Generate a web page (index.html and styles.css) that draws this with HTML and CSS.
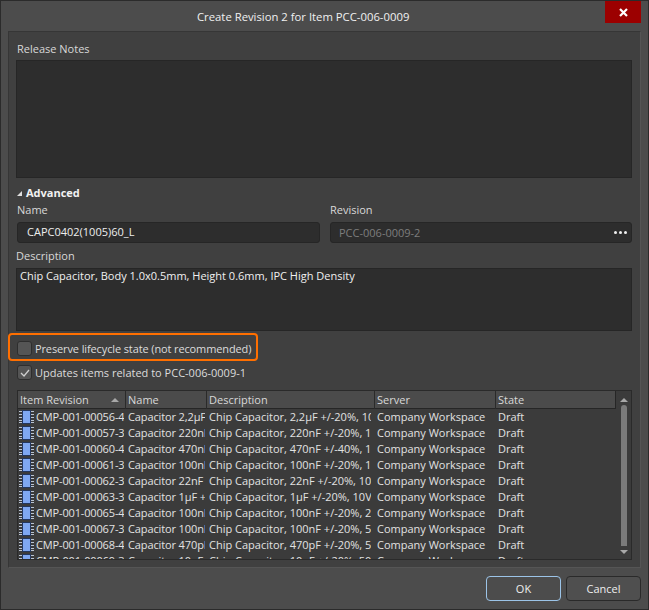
FILE: index.html
```html
<!DOCTYPE html>
<html lang="en">
<head>
<meta charset="utf-8">
<title>Create Revision 2</title>
<link rel="stylesheet" href="styles.css">
</head>
<body>
<svg class="defs" width="0" height="0" aria-hidden="true">
  <symbol id="chip" viewBox="0 0 15 14">
    <path d="M0 1.5h15M0 4.5h15M0 7.5h15M0 10.5h15M0 12.5h15" stroke="#b9c3d2" stroke-width="1" fill="none"/>
    <rect x="3" y="0" width="9" height="14" fill="#23375f"/>
    <rect x="4" y="1" width="7" height="12" fill="#7fa8f2"/>
  </symbol>
</svg>
<div class="window">
  <header class="titlebar">
    <h1 class="title">Create Revision 2 for Item PCC-006-0009</h1>
    <button class="close" aria-label="Close">
      <svg width="9" height="9" viewBox="0 0 9 9"><path d="M1 1l7 7M8 1L1 8" stroke="#fff" stroke-width="2.2" fill="none"/></svg>
    </button>
  </header>
  <main class="panel">
    <label class="label notes-label">Release Notes</label>
    <div class="box notes"></div>
    <div class="advanced"><span class="tri"></span>Advanced</div>
    <div class="fields">
      <div class="field">
        <label class="label">Name</label>
        <div class="input name-input">CAPC0402(1005)60_L</div>
      </div>
      <div class="field">
        <label class="label">Revision</label>
        <div class="input rev-input"><span>PCC-006-0009-2</span><span class="dots"><i></i><i></i><i></i></span></div>
      </div>
    </div>
    <label class="label desc-label">Description</label>
    <div class="box desc">Chip Capacitor, Body 1.0x0.5mm, Height 0.6mm, IPC High Density</div>
    <div class="highlight">
      <span class="check"></span>
      <span class="check-text">Preserve lifecycle state (not recommended)</span>
    </div>
    <div class="check-row">
      <span class="check">
        <svg width="10" height="8" viewBox="0 0 10 8"><path d="M1 4l3 3 5-6" stroke="#cfcfcf" stroke-width="1.3" fill="none"/></svg>
      </span>
      <span class="check-text">Updates items related to PCC-006-0009-1</span>
    </div>
    <div class="table">
      <div class="table-main">
        <div class="row head">
          <div class="th first">Item Revision<span class="sort"></span></div>
          <div class="th">Name</div>
          <div class="th">Description</div>
          <div class="th">Server</div>
          <div class="th">State</div>
        </div>
        <div class="rows">
          <div class="row"><div class="td id"><svg class="chip"><use href="#chip"/></svg>CMP-001-00056-4</div><div class="td tight">Capacitor 2,2µF</div><div class="td dsc">Chip Capacitor, 2,2µF +/-20%, 10V</div><div class="td">Company Workspace</div><div class="td">Draft</div></div>
          <div class="row"><div class="td id"><svg class="chip"><use href="#chip"/></svg>CMP-001-00057-3</div><div class="td tight">Capacitor 220nF</div><div class="td dsc">Chip Capacitor, 220nF +/-20%, 16V</div><div class="td">Company Workspace</div><div class="td">Draft</div></div>
          <div class="row"><div class="td id"><svg class="chip"><use href="#chip"/></svg>CMP-001-00060-4</div><div class="td tight">Capacitor 470nF</div><div class="td dsc">Chip Capacitor, 470nF +/-40%, 16V</div><div class="td">Company Workspace</div><div class="td">Draft</div></div>
          <div class="row"><div class="td id"><svg class="chip"><use href="#chip"/></svg>CMP-001-00061-3</div><div class="td tight">Capacitor 100nF</div><div class="td dsc">Chip Capacitor, 100nF +/-20%, 16V</div><div class="td">Company Workspace</div><div class="td">Draft</div></div>
          <div class="row"><div class="td id"><svg class="chip"><use href="#chip"/></svg>CMP-001-00062-3</div><div class="td tight">Capacitor 22nF</div><div class="td dsc">Chip Capacitor, 22nF +/-20%, 10V</div><div class="td">Company Workspace</div><div class="td">Draft</div></div>
          <div class="row"><div class="td id"><svg class="chip"><use href="#chip"/></svg>CMP-001-00063-3</div><div class="td tight">Capacitor 1µF +/-20%</div><div class="td dsc">Chip Capacitor, 1µF +/-20%, 10V</div><div class="td">Company Workspace</div><div class="td">Draft</div></div>
          <div class="row"><div class="td id"><svg class="chip"><use href="#chip"/></svg>CMP-001-00065-4</div><div class="td tight">Capacitor 100nF</div><div class="td dsc">Chip Capacitor, 100nF +/-20%, 25V</div><div class="td">Company Workspace</div><div class="td">Draft</div></div>
          <div class="row"><div class="td id"><svg class="chip"><use href="#chip"/></svg>CMP-001-00067-3</div><div class="td tight">Capacitor 100nF</div><div class="td dsc">Chip Capacitor, 100nF +/-20%, 50V</div><div class="td">Company Workspace</div><div class="td">Draft</div></div>
          <div class="row"><div class="td id"><svg class="chip"><use href="#chip"/></svg>CMP-001-00068-4</div><div class="td tight">Capacitor 470pF</div><div class="td dsc">Chip Capacitor, 470pF +/-20%, 50V</div><div class="td">Company Workspace</div><div class="td">Draft</div></div>
          <div class="row"><div class="td id"><svg class="chip"><use href="#chip"/></svg>CMP-001-00069-3</div><div class="td tight">Capacitor 10nF</div><div class="td dsc">Chip Capacitor, 10nF +/-20%, 50V</div><div class="td">Company Workspace</div><div class="td">Draft</div></div>
        </div>
      </div>
      <div class="scrollbar">
        <span class="arrow up"></span>
        <span class="thumb"></span>
        <span class="arrow down"></span>
      </div>
    </div>
  </main>
  <footer class="footer">
    <button class="btn primary">OK</button>
    <button class="btn">Cancel</button>
  </footer>
</div>
</body>
</html>
```
FILE: styles.css
```css
* { box-sizing: border-box; }
html, body { margin: 0; padding: 0; }
body {
  width: 649px;
  height: 610px;
  overflow: hidden;
  background: #4c4c4c;
  font: 11px/14px "Open Sans", "Noto Sans", sans-serif;
  color: #e6e6e6;
}
.defs { display: block; width: 0; height: 0; }
.window {
  width: 649px;
  height: 610px;
  display: flex;
  flex-direction: column;
  background: #4c4c4c;
  border: 1px solid #2b2b2b;
}
.titlebar {
  height: 30px;
  flex: none;
  display: flex;
  justify-content: space-between;
  align-items: flex-start;
  padding-left: 196px;
}
.title {
  margin: 8px 0 0;
  font-size: 11.3px;
  line-height: 16px;
  font-weight: 400;
  color: #f0f0f0;
}
.close {
  width: 36px;
  height: 22px;
  margin: 0 7px 0 0;
  padding: 0;
  border: 0;
  background: #9c0000;
  display: flex;
  align-items: center;
  justify-content: center;
}
.panel {
  margin: 0 7px;
  width: 633px;
  height: 537px;
  flex: none;
  display: flex;
  flex-direction: column;
  padding: 0 8px 7px 7px;
  background: #404040;
  border: 1px solid #363636;
  border-right-color: #555;
  border-bottom-color: #555;
}
.label {
  display: block;
  font-size: 11px;
  line-height: 14px;
  color: #d8d8d8;
}
.notes-label { margin: 10px 0 4px 1px; }
.box {
  background: #2d2d2d;
  border: 1px solid #262626;
}
.notes { height: 118px; flex: none; }
.advanced {
  display: flex;
  align-items: center;
  height: 14px;
  margin: 8px 0 3px 1px;
  font-weight: 700;
  color: #f2f2f2;
}
.tri {
  width: 0;
  height: 0;
  margin-right: 4px;
  border-style: solid;
  border-width: 0 0 5px 5px;
  border-color: transparent transparent #e0e0e0 transparent;
}
.fields {
  display: grid;
  grid-template-columns: 303px 302px;
  column-gap: 10px;
  margin-left: 1px;
}
.field .label { margin-bottom: 5px; }
.input {
  height: 21px;
  background: #2d2d2d;
  border: 1px solid #262626;
  border-radius: 3px;
  padding: 1px 9px;
  line-height: 15px;
  color: #eee;
}
.rev-input {
  display: flex;
  justify-content: space-between;
  align-items: center;
  padding: 0 4px 1px 8px;
  color: #7d7d7d;
}
.dots { display: flex; gap: 2px; }
.dots i { width: 3px; height: 3px; border-radius: 50%; background: #f0f0f0; }
.desc-label { margin: 6px 0 5px 0; }
.desc {
  height: 63px;
  flex: none;
  padding: 0 3px;
  line-height: 14px;
  color: #f0f0f0;
}
.highlight {
  display: flex;
  align-items: center;
  width: 250px;
  height: 30px;
  margin: 2px 0 4px -8px;
  padding: 2px 0 0 7px;
  white-space: nowrap;
  border: 2px solid #ff6f00;
  border-radius: 4px;
}
.highlight .check-text { letter-spacing: -0.12px; padding-top: 2px; }
.check {
  width: 15px;
  height: 15px;
  flex: none;
  margin-right: 3px;
  display: flex;
  align-items: center;
  justify-content: center;
  background: #555;
  border: 1px solid #2e2e2e;
  border-radius: 3px;
}
.check-text { color: #dcdcdc; }
.check-row {
  display: flex;
  align-items: center;
  margin: 0 0 10px 1px;
  height: 16px;
}
.table {
  height: 170px;
  flex: none;
  display: flex;
  margin-left: 1px;
  background: #3b3b3b;
  border: 1px solid #2a2a2a;
}
.table-main { flex: 1; min-width: 0; display: flex; flex-direction: column; }
.row {
  display: grid;
  grid-template-columns: 107px 81px 168px 121px 1fr;
  height: 16px;
  line-height: 16px;
}
.head {
  line-height: 18px;
  flex: none;
  background: #4b4b4b;
  border-bottom: 1px solid #262626;
  border-right: 1px solid #262626;
  height: 18px;
  color: #d8d8d8;
}
.th {
  padding-left: 2px;
  display: flex;
  align-items: center;
  border-left: 1px solid #2a2a2a;
  margin: 0;
}
.th.first { border-left: 0; justify-content: space-between; padding-right: 6px; padding-left: 2px; }
.sort {
  width: 0;
  height: 0;
  border-style: solid;
  border-width: 0 4px 4px 4px;
  border-color: transparent transparent #a8a8a8 transparent;
}
.rows { flex: 1; min-height: 0; overflow: hidden; }
.td {
  overflow: hidden;
  white-space: nowrap;
  padding-left: 3px;
  color: #e2e2e2;
  margin-right: 1px;
}
.td.tight { letter-spacing: -0.12px; }
.td.dsc { margin-right: 3px; }
.td.id { padding-left: 1px; display: flex; align-items: center; letter-spacing: -0.15px; }
.chip { width: 15px; height: 14px; flex: none; margin-right: 2px; }
.scrollbar {
  width: 15px;
  flex: none;
  display: flex;
  flex-direction: column;
  align-items: center;
  padding: 7px 0 5px;
  background: #3b3b3b;
}
.arrow {
  width: 0;
  height: 0;
  border-style: solid;
  flex: none;
}
.arrow.up { border-width: 0 4px 4px 4px; border-color: transparent transparent #a8a8a8 transparent; }
.arrow.down { border-width: 4px 4px 0 4px; border-color: #a8a8a8 transparent transparent transparent; }
.thumb {
  width: 6px;
  flex: 1;
  margin: 3px 0 4px;
  background: #7b7b7b;
  border-radius: 3px 3px 0 0;
}
.footer {
  flex: 1;
  display: flex;
  justify-content: flex-end;
  align-items: flex-start;
  gap: 5px;
  padding: 8px 7px 0 0;
}
.btn {
  width: 75px;
  height: 25px;
  padding: 0;
  font: inherit;
  color: #eee;
  background: #4f4f4f;
  border: 1px solid #2a2a2a;
  border-radius: 4px;
}
.btn.primary { border-color: #9cc4e8; background: #4c4c4c; }
```
